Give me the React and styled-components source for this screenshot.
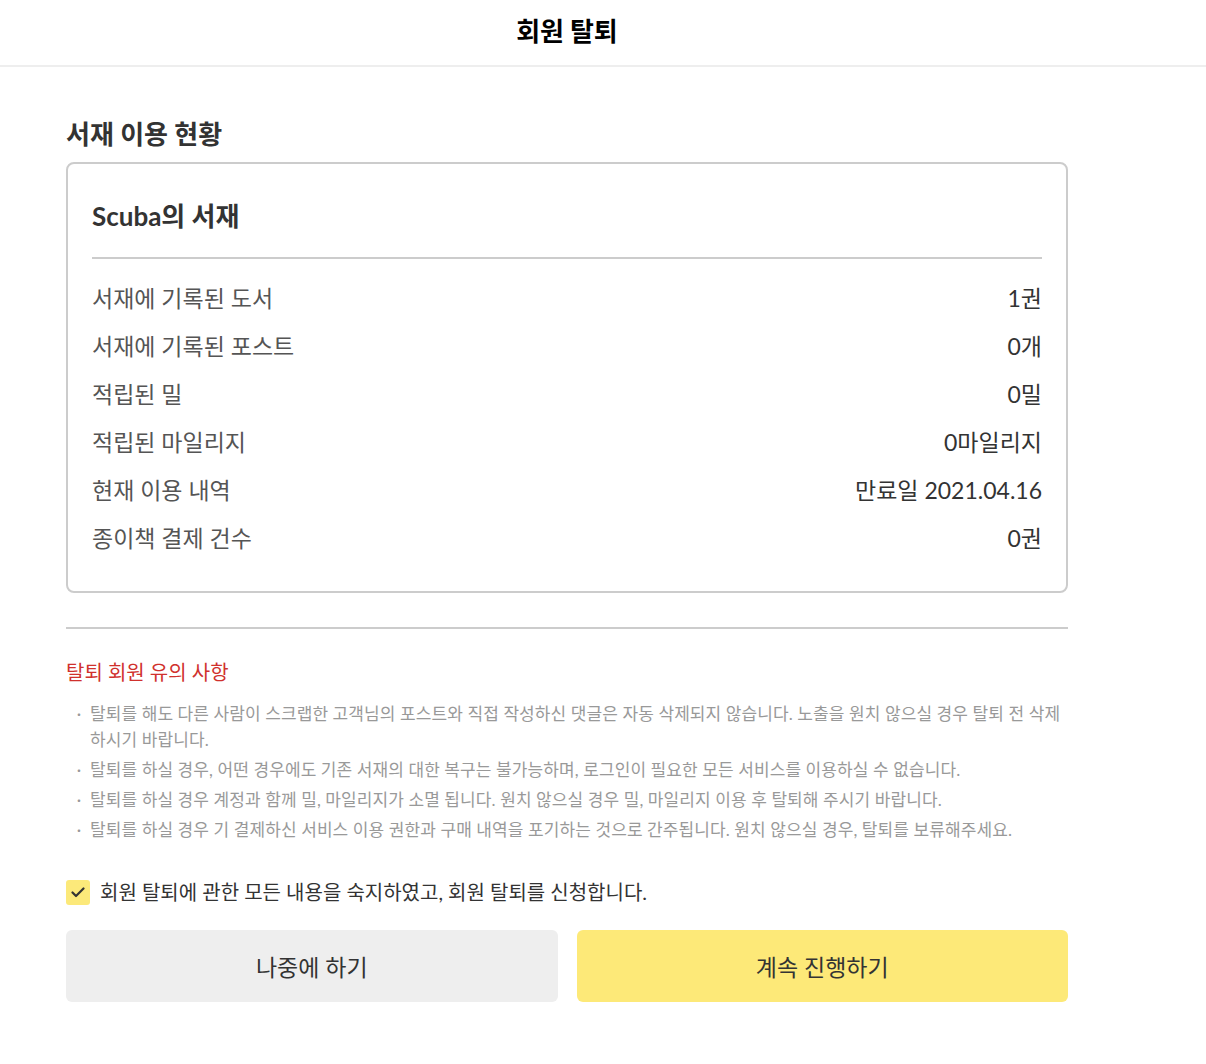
import React from "react";
import styled, { createGlobalStyle } from "styled-components";

const GlobalStyle = createGlobalStyle`
  html, body { margin: 0; padding: 0; background: #fff; }
  body {
    font-family: Lato, "Noto Sans CJK KR", "Noto Sans", sans-serif;
    color: #333;
    -webkit-font-smoothing: antialiased;
  }
  * { box-sizing: border-box; }
`;

const Header = styled.header`
  height: 67px;
  border-bottom: 2px solid #eeeeee;
`;

const HeaderInner = styled.div`
  width: 1002px;
  margin-left: 66px;
  height: 100%;
  display: flex;
  align-items: center;
  justify-content: center;
  padding-bottom: 6px;
`;

const HeaderTitle = styled.h1`
  margin: 0;
  font-family: "Noto Sans CJK KR", sans-serif;
  font-size: 26px;
  line-height: 34px;
  font-weight: 700;
  color: #000;
`;

const Main = styled.main`
  width: 1002px;
  margin-left: 66px;
  padding-top: 50px;
  padding-bottom: 60px;
`;

const SectionTitle = styled.h2`
  margin: 0 0 11px;
  font-size: 26px;
  line-height: 34px;
  font-weight: 700;
  color: #333;
`;

const Card = styled.section`
  border: 2px solid #cccccc;
  border-radius: 8px;
  padding: 34px 24px 29px;
`;

const CardTitle = styled.h3`
  margin: 0;
  font-size: 26px;
  line-height: 36px;
  font-weight: 700;
  color: #333;
  padding-bottom: 23px;
  border-bottom: 2px solid #cccccc;
`;

const StatList = styled.dl`
  margin: 0;
  padding-top: 15px;
`;

const StatRow = styled.div`
  display: flex;
  justify-content: space-between;
  align-items: center;
  height: 48px;
  font-size: 23px;
  line-height: 32px;
`;

const StatLabel = styled.dt`
  color: #555;
`;

const StatValue = styled.dd`
  margin: 0;
  color: #333;
`;

const Divider = styled.hr`
  margin: 34px 0 0;
  border: 0;
  border-top: 2px solid #cccccc;
`;

const NoticeTitle = styled.h4`
  margin: 29px 0 15px;
  font-size: 20px;
  line-height: 28px;
  font-weight: 400;
  color: #d0312d;
`;

const NoticeList = styled.ul`
  list-style: none;
  margin: 0;
  padding: 0;
  display: flex;
  flex-direction: column;
  gap: 4px;
`;

const NoticeItem = styled.li`
  display: flex;
  font-size: 17px;
  line-height: 26px;
  color: #999;
  letter-spacing: 0.1px;
`;

const Bullet = styled.span`
  flex: 0 0 24px;
  text-align: center;
  padding-left: 2px;
`;

const CheckRow = styled.label`
  display: flex;
  align-items: center;
  gap: 10px;
  margin-top: 35px;
  font-size: 20px;
  line-height: 28px;
  color: #333;
  cursor: pointer;
`;

const CheckBox = styled.span`
  flex: 0 0 24px;
  height: 25px;
  border-radius: 3px;
  background: ${(p) => (p.$checked ? "#fce97a" : "#eee")};
  display: flex;
  align-items: center;
  justify-content: center;
`;

const ButtonRow = styled.div`
  display: grid;
  grid-template-columns: 1fr 1fr;
  gap: 19px;
  margin-top: 24px;
`;

const Button = styled.button`
  height: 72px;
  border: 0;
  border-radius: 6px;
  background: ${(p) => (p.$primary ? "#fde978" : "#eeeeee")};
  font-family: inherit;
  font-size: 23px;
  color: #333;
  cursor: pointer;
`;

const stats = [
  ["서재에 기록된 도서", "1권"],
  ["서재에 기록된 포스트", "0개"],
  ["적립된 밀", "0밀"],
  ["적립된 마일리지", "0마일리지"],
  ["현재 이용 내역", "만료일 2021.04.16"],
  ["종이책 결제 건수", "0권"],
];

const notices = [
  "탈퇴를 해도 다른 사람이 스크랩한 고객님의 포스트와 직접 작성하신 댓글은 자동 삭제되지 않습니다. 노출을 원치 않으실 경우 탈퇴 전 삭제하시기 바랍니다.",
  "탈퇴를 하실 경우, 어떤 경우에도 기존 서재의 대한 복구는 불가능하며, 로그인이 필요한 모든 서비스를 이용하실 수 없습니다.",
  "탈퇴를 하실 경우 계정과 함께 밀, 마일리지가 소멸 됩니다. 원치 않으실 경우 밀, 마일리지 이용 후 탈퇴해 주시기 바랍니다.",
  "탈퇴를 하실 경우 기 결제하신 서비스 이용 권한과 구매 내역을 포기하는 것으로 간주됩니다. 원치 않으실 경우, 탈퇴를 보류해주세요.",
];

export default function App() {
  const [checked, setChecked] = React.useState(true);
  return (
    <>
      <GlobalStyle />
      <Header>
        <HeaderInner>
          <HeaderTitle>회원 탈퇴</HeaderTitle>
        </HeaderInner>
      </Header>
      <Main>
        <SectionTitle>서재 이용 현황</SectionTitle>
        <Card>
          <CardTitle>Scuba의 서재</CardTitle>
          <StatList>
            {stats.map(([k, v]) => (
              <StatRow key={k}>
                <StatLabel>{k}</StatLabel>
                <StatValue>{v}</StatValue>
              </StatRow>
            ))}
          </StatList>
        </Card>
        <Divider />
        <NoticeTitle>탈퇴 회원 유의 사항</NoticeTitle>
        <NoticeList>
          {notices.map((n) => (
            <NoticeItem key={n}>
              <Bullet>·</Bullet>
              <span>{n}</span>
            </NoticeItem>
          ))}
        </NoticeList>
        <CheckRow onClick={() => setChecked(!checked)}>
          <CheckBox $checked={checked}>
            {checked && (
              <svg width="14" height="11" viewBox="0 0 14 11" fill="none">
                <path d="M1.5 5.5L5 9L12.5 1.5" stroke="#333" strokeWidth="2.2" strokeLinecap="round" strokeLinejoin="round" />
              </svg>
            )}
          </CheckBox>
          회원 탈퇴에 관한 모든 내용을 숙지하였고, 회원 탈퇴를 신청합니다.
        </CheckRow>
        <ButtonRow>
          <Button>나중에 하기</Button>
          <Button $primary>계속 진행하기</Button>
        </ButtonRow>
      </Main>
    </>
  );
}
